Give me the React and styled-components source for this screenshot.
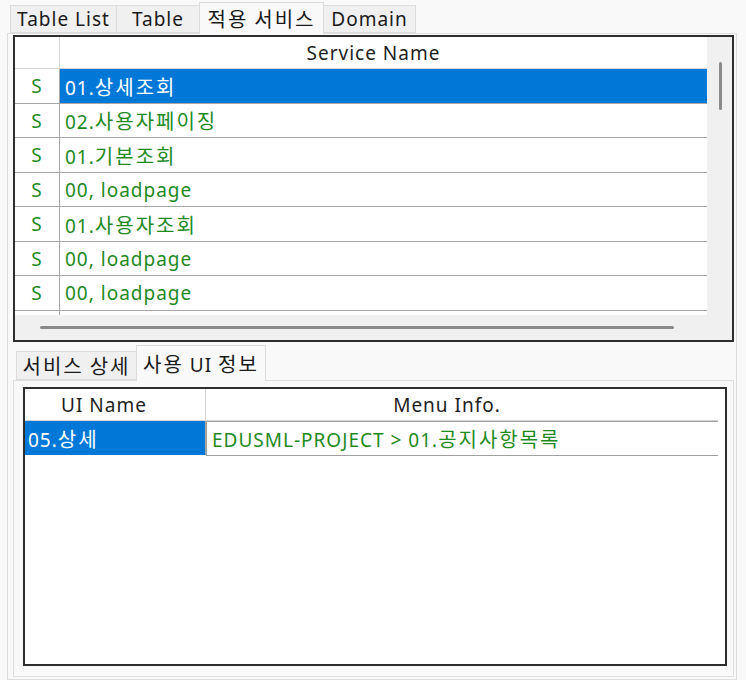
import styled, { createGlobalStyle } from 'styled-components';

const GlobalStyle = createGlobalStyle`
  html, body {
    margin: 0;
    padding: 0;
    background: #f9f9f9;
  }
  body {
    font-family: "Noto Sans", "Noto Sans CJK KR", sans-serif;
    font-size: 19px;
    letter-spacing: 1px;
    color: #1e1e1e;
  }
`;

const Window = styled.div`
  width: 746px;
  height: 680px;
  padding: 2px 9px 0 7px;
  box-sizing: border-box;
  display: flex;
  flex-direction: column;
  overflow: hidden;
`;

const TabBar = styled.div`
  display: flex;
  align-items: flex-end;
  height: ${({ $height }) => $height}px;
  padding-left: ${({ $inset }) => $inset}px;
  flex-shrink: 0;
  position: relative;
  z-index: 1;
`;

const Tab = styled.div`
  box-sizing: border-box;
  width: ${({ $w }) => $w}px;
  height: ${({ $active, $drop }) => ($active ? 'calc(100% + 1px)' : `calc(100% - ${$drop}px)`)};
  margin-bottom: ${({ $active }) => ($active ? '-1px' : '0')};
  display: flex;
  align-items: center;
  justify-content: center;
  background: ${({ $active }) => ($active ? '#f9f9f9' : '#f0f0f0')};
  border: 1px solid #dcdcdc;
  border-bottom: ${({ $active }) => ($active ? 'none' : '1px solid #dcdcdc')};
  border-left-width: ${({ $first, $active }) => ($first || $active ? 1 : 0)}px;
  border-right-width: ${({ $beforeActive }) => ($beforeActive ? 0 : 1)}px;
  color: #1a1a1a;
  white-space: nowrap;
  position: relative;
  z-index: ${({ $active }) => ($active ? 2 : 1)};
`;

const Panel = styled.div`
  box-sizing: border-box;
  border: 1px solid #dedede;
  background: #f9f9f9;
  display: flex;
  flex-direction: column;
  flex: 1;
  min-height: 0;
  padding: ${({ $pad }) => $pad};
`;

const Frame = styled.div`
  box-sizing: border-box;
  height: ${({ $height }) => $height}px;
  flex-shrink: 0;
  border: 2px solid #2e2e2e;
  background: #ffffff;
  display: grid;
  overflow: hidden;
`;

const ServiceFrame = styled(Frame)`
  grid-template-columns: 1fr 25px;
  grid-template-rows: 1fr 25px;
`;

const GridView = styled.div`
  overflow: hidden;
  background: #ffffff;
`;

const Row = styled.div`
  display: grid;
  grid-template-columns: ${({ $cols }) => $cols};
  height: ${({ $h }) => $h}px;
  box-sizing: border-box;
  border-bottom: 1px solid ${({ $header }) => ($header ? '#d4d4d4' : '#a6a6a6')};
`;

const Cell = styled.div`
  display: flex;
  align-items: center;
  justify-content: ${({ $align }) => $align || 'flex-start'};
  padding: ${({ $pad }) => $pad || '0 0 0 5px'};
  box-sizing: border-box;
  border-right: 1px solid ${({ $header }) => ($header ? '#d4d4d4' : '#a6a6a6')};
  background: ${({ $selected }) => ($selected ? '#0078d7' : 'transparent')};
  color: ${({ $selected, $header }) => ($selected ? '#ffffff' : $header ? '#1e1e1e' : '#1f8a1f')};
  white-space: nowrap;
  overflow: hidden;
  &:last-child {
    border-right: none;
  }
`;

// Hangul runs are set a little larger and wider, as the original font does
const Ko = styled.span`
  font-size: 20px;
  letter-spacing: 2px;
`;

const ScrollTrack = styled.div`
  background: #f0f0f0;
  display: flex;
  align-items: ${({ $vertical }) => ($vertical ? 'flex-start' : 'center')};
  justify-content: ${({ $vertical }) => ($vertical ? 'center' : 'flex-start')};
  padding: ${({ $vertical }) => ($vertical ? '25px 0 0 1px' : '0 0 0 25px')};
`;

const Thumb = styled.div`
  background: #8a8a8a;
  border-radius: 2px;
  width: ${({ $vertical }) => ($vertical ? '3px' : '634px')};
  height: ${({ $vertical }) => ($vertical ? '48px' : '3px')};
`;

const Corner = styled.div`
  background: #f0f0f0;
`;

const Gap = styled.div`
  height: ${({ $h }) => $h}px;
  flex-shrink: 0;
`;

const UiFrame = styled(Frame)`
  align-content: start;
`;

const UiTable = styled.div`
  width: 693px;
`;

const FocusCell = styled(Cell)`
  border: 1px solid #a0a0a0;
  margin-bottom: -1px;
  padding-left: 5px;
`;

function Txt({ children }) {
  return (
    <span>
      {children.split(/([\uAC00-\uD7A3]+)/).map((part, i) => (i % 2 ? <Ko key={i}>{part}</Ko> : part))}
    </span>
  );
}

const services = [
  '01.상세조회',
  '02.사용자페이징',
  '01.기본조회',
  '00, loadpage',
  '01.사용자조회',
  '00, loadpage',
  '00, loadpage',
  '',
];

const topTabs = [
  { label: 'Table List', w: 107 },
  { label: 'Table', w: 82 },
  { label: '적용 서비스', w: 125, active: true },
  { label: 'Domain', w: 92 },
];

const bottomTabs = [
  { label: '서비스 상세', w: 120 },
  { label: '사용 UI 정보', w: 130, active: true },
];

function Tabs({ tabs, height, drop }) {
  return (
    <TabBar $height={height} $inset={3}>
      {tabs.map((t, i) => (
        <Tab
          key={t.label}
          $w={t.w}
          $drop={drop}
          $first={i === 0}
          $active={t.active}
          $beforeActive={tabs[i + 1] && tabs[i + 1].active}
        >
          <Txt>{t.label}</Txt>
        </Tab>
      ))}
    </TabBar>
  );
}

export default function App() {
  const cols = '45px 1fr';
  return (
    <>
      <GlobalStyle />
      <Window>
        <Tabs tabs={topTabs} height={31} drop={3} />
        <Panel $pad="1px 2px 2px 5px">
          <ServiceFrame $height={307}>
            <GridView>
              <Row $cols={cols} $h={32} $header>
                <Cell $header />
                <Cell $header $align="center" $pad="0 20px 0 0">
                  Service Name
                </Cell>
              </Row>
              {services.map((name, i) => (
                <Row key={i} $cols={cols} $h={i % 2 === 0 ? 35 : 34}>
                  <Cell $align="center" $pad="0">
                    {name && 'S'}
                  </Cell>
                  <Cell $selected={i === 0}>
                    <Txt>{name}</Txt>
                  </Cell>
                </Row>
              ))}
            </GridView>
            <ScrollTrack $vertical>
              <Thumb $vertical />
            </ScrollTrack>
            <ScrollTrack>
              <Thumb />
            </ScrollTrack>
            <Corner />
          </ServiceFrame>
          <Gap $h={3} />
          <Tabs tabs={bottomTabs} height={35} drop={6} />
          <Panel $pad="6px 6px 8px 9px">
            <UiFrame $height={279}>
              <UiTable>
                <Row $cols="181px 1fr" $h={32} $header>
                  <Cell $header $align="center" $pad="0 22px 0 0">
                    UI Name
                  </Cell>
                  <Cell $header $align="center" $pad="0 30px 0 0">
                    Menu Info.
                  </Cell>
                </Row>
                <Row $cols="181px 1fr" $h={34} style={{ borderBottom: 'none' }}>
                  <Cell $selected $pad="0 0 0 3px">
                    <Txt>05.상세</Txt>
                  </Cell>
                  <FocusCell>
                    <Txt>EDUSML-PROJECT &gt; 01.공지사항목록</Txt>
                  </FocusCell>
                </Row>
              </UiTable>
            </UiFrame>
          </Panel>
        </Panel>
      </Window>
    </>
  );
}
